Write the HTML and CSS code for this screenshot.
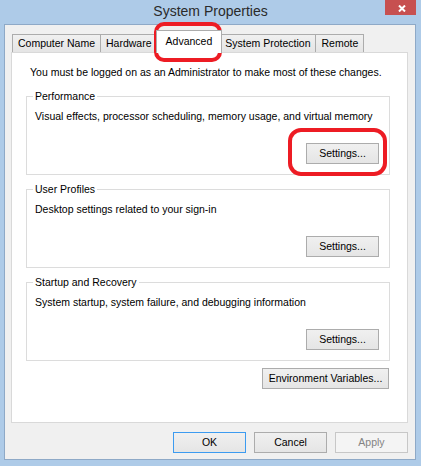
FILE: index.html
```html
<!DOCTYPE html>
<html lang="en">
<head>
    <meta charset="UTF-8">
    <meta name="viewport" content="width=device-width, initial-scale=1.0">
    <title>System Properties</title>
    <link rel="stylesheet" href="styles.css">
</head>
<body>

    <div class="window">
        <div class="titlebar">
            <span class="title">System Properties</span>
            <button class="close" type="button" aria-label="Close">
                <svg width="8" height="7" viewBox="0 0 8 7">
                    <path d="M1 0.5 L7 6.5 M7 0.5 L1 6.5" stroke="#fff" stroke-width="2" fill="none"/>
                </svg>
            </button>
        </div>

        <div class="client">
            <div class="tabs">
                <span class="tab">Computer Name</span>
                <span class="tab">Hardware</span>
                <span class="tab active">Advanced</span>
                <span class="tab">System Protection</span>
                <span class="tab">Remote</span>
            </div>

            <div class="panel">
                <p class="note">You must be logged on as an Administrator to make most of these changes.</p>

                <fieldset class="group">
                    <legend>Performance</legend>
                    <p class="desc">Visual effects, processor scheduling, memory usage, and virtual memory</p>
                    <div class="group-actions">
                        <button class="btn" type="button">Settings...</button>
                    </div>
                </fieldset>

                <fieldset class="group">
                    <legend>User Profiles</legend>
                    <p class="desc">Desktop settings related to your sign-in</p>
                    <div class="group-actions">
                        <button class="btn" type="button">Settings...</button>
                    </div>
                </fieldset>

                <fieldset class="group">
                    <legend>Startup and Recovery</legend>
                    <p class="desc">System startup, system failure, and debugging information</p>
                    <div class="group-actions">
                        <button class="btn" type="button">Settings...</button>
                    </div>
                </fieldset>

                <div class="panel-actions">
                    <button class="btn wide" type="button">Environment Variables...</button>
                </div>
            </div>

            <div class="dialog-actions">
                <button class="btn default" type="button">OK</button>
                <button class="btn" type="button">Cancel</button>
                <button class="btn" type="button" disabled>Apply</button>
            </div>
        </div>

        <!-- red marker annotations drawn over the dialog -->
        <div class="mark mark-tab"></div>
        <div class="mark mark-settings"></div>
    </div>

</body>
</html>
```

FILE: styles.css
```css
body {
    margin: 0;
    padding: 0;
    background-color: #aecbe8;
    font-family: "Liberation Sans", Arial, sans-serif;
    font-size: 10.5px;
    color: #000;
}
.window {
    position: relative;
    width: 421px;
    height: 466px;
    display: flex;
    flex-direction: column;
}
.titlebar {
    height: 24px;
    display: flex;
    align-items: flex-start;
    padding: 0 5px 0 36px;
}
.title {
    flex: 1;
    text-align: center;
    font-size: 14px;
    line-height: 22px;
    color: #2a2a2a;
}
.close {
    width: 31px;
    height: 15px;
    padding: 0;
    border: none;
    background-color: #c75050;
}
.close svg {
    display: block;
    margin: 1px auto 0 13px;
}
.client {
    box-sizing: border-box;
    height: 436px;
    margin: 0 5px 0 4px;
    padding: 5px 7px 6px 6px;
    border: 1px solid #8ea9c7;
    background-color: #f0f0f0;
    display: flex;
    flex-direction: column;
}
.tabs {
    display: flex;
    align-items: flex-end;
    height: 22px;
    padding-left: 1px;
}
.tab {
    box-sizing: border-box;
    height: 18px;
    padding: 0 5px;
    line-height: 17px;
    border: 1px solid #acacac;
    border-bottom: none;
    background: linear-gradient(#f0f0f0, #e5e5e5);
    white-space: nowrap;
}
.tab + .tab {
    margin-left: -1px;
}
.tab.active {
    position: relative;
    z-index: 1;
    height: 23px;
    margin: 0 -2px -1px -2px;
    padding: 0 9px;
    line-height: 21px;
    background: #fff;
}
.panel {
    box-sizing: border-box;
    height: 371px;
    padding-top: 12px;
    border: 1px solid #d9d9d9;
    background-color: #fff;
}
.note {
    margin: 0 0 10px 18px;
    line-height: 14px;
}
.group {
    margin: 0 17px 7px 14px;
    padding: 0 10px 10px 8px;
    border: 1px solid #dcdcdc;
    min-width: 0;
}
.group legend {
    margin-left: -2px;
    padding: 0 2px;
    line-height: 15px;
}
.desc {
    margin: 5px 0 0 0;
    line-height: 14px;
}
.group-actions {
    display: flex;
    justify-content: flex-end;
    margin-top: 20px;
}
.panel-actions {
    display: flex;
    justify-content: flex-end;
    margin-top: 6px;
    padding-right: 18px;
}
.btn {
    box-sizing: border-box;
    width: 73px;
    height: 21px;
    padding: 0;
    border: 1px solid #acacac;
    background: linear-gradient(#f0f0f0, #e5e5e5);
    font: inherit;
    color: #000;
    line-height: 19px;
}
.btn.wide {
    width: 127px;
}
.btn.default {
    border-color: #3c9bf0;
}
.btn:disabled {
    border-color: #c7c7c7;
    background: #f4f4f4;
    color: #838383;
}
.dialog-actions {
    display: flex;
    justify-content: flex-end;
    gap: 8px;
    margin-top: 9px;
}
.mark {
    position: absolute;
    box-sizing: border-box;
    border: 4px solid #ed1c24;
}
.mark-tab {
    left: 154px;
    top: 22px;
    width: 68px;
    height: 40px;
    border-radius: 10px;
}
.mark-settings {
    left: 288px;
    top: 128px;
    width: 99px;
    height: 48px;
    border-radius: 13px;
}
```
